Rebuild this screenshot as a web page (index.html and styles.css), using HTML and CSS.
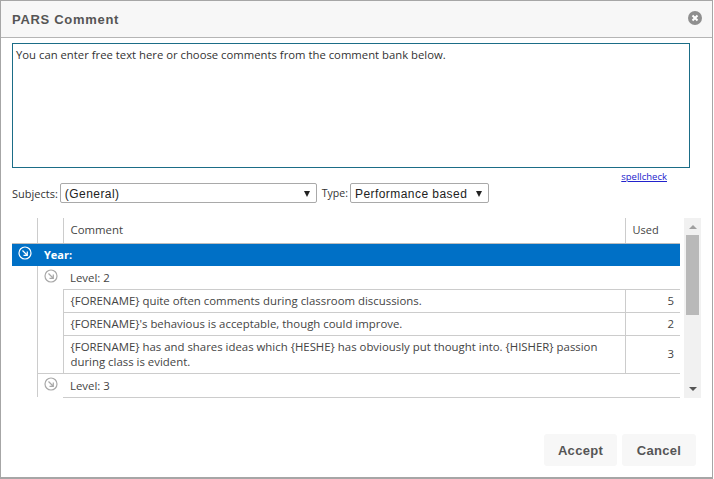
FILE: index.html
```html
<!DOCTYPE html>
<html lang="en">
<head>
  <meta charset="UTF-8">
  <title>PARS Comment</title>
  <link rel="stylesheet" href="styles.css">
</head>
<body>

<div class="dialog">
  <header class="title-bar">
    <h1>PARS Comment</h1>
    <svg class="close-icon" width="14" height="14" viewBox="0 0 14 14">
      <circle cx="7" cy="7" r="7" fill="#8f8f8f"/>
      <path d="M4.5 4.5l5 5M9.5 4.5l-5 5" stroke="#fff" stroke-width="2"/>
    </svg>
  </header>

  <div class="body">
    <textarea class="free-text">You can enter free text here or choose comments from the comment bank below.</textarea>
    <div class="spell-row"><a href="#">spellcheck</a></div>

    <div class="filters">
      <label>Subjects:</label>
      <div class="fake-select subject-select"><span>(General)</span><i class="arrow"></i></div>
      <label class="type-label">Type:</label>
      <div class="fake-select type-select"><span>Performance based</span><i class="arrow"></i></div>
    </div>

    <div class="bank">
      <div class="bank-scroll">
        <table>
          <colgroup>
            <col class="col-a"><col class="col-b"><col class="col-c"><col class="col-d">
          </colgroup>
          <tr class="head">
            <th></th><th></th><th>Comment</th><th>Used</th>
          </tr>
          <tr class="year">
            <td class="icon-cell">
              <svg class="arrow-icon" width="14" height="14" viewBox="0 0 14 14">
                <circle cx="7" cy="7" r="6" fill="none" stroke="#fff" stroke-width="1.2"/>
                <path d="M4.5 4.5l4.5 4.5M9.3 5.5v3.8H5.5" fill="none" stroke="#fff" stroke-width="1.2"/>
              </svg>
            </td>
            <td colspan="3" class="year-name">Year:</td>
          </tr>
          <tr class="level">
            <td class="blank"></td>
            <td class="icon-cell">
              <svg class="arrow-icon" width="14" height="14" viewBox="0 0 14 14">
                <circle cx="7" cy="7" r="6" fill="none" stroke="#a8a8a8" stroke-width="1.2"/>
                <path d="M4.5 4.5l4.5 4.5M9.3 5.5v3.8H5.5" fill="none" stroke="#a8a8a8" stroke-width="1.2"/>
              </svg>
            </td>
            <td colspan="2">Level: 2</td>
          </tr>
          <tr class="comment">
            <td class="blank"></td><td class="blank"></td>
            <td>{FORENAME} quite often comments during classroom discussions.</td>
            <td class="used">5</td>
          </tr>
          <tr class="comment">
            <td class="blank"></td><td class="blank"></td>
            <td>{FORENAME}'s behavious is acceptable, though could improve.</td>
            <td class="used">2</td>
          </tr>
          <tr class="comment last">
            <td class="blank"></td><td class="blank"></td>
            <td>{FORENAME} has and shares ideas which {HESHE} has obviously put thought into. {HISHER} passion during class is evident.</td>
            <td class="used">3</td>
          </tr>
          <tr class="level">
            <td class="blank"></td>
            <td class="icon-cell">
              <svg class="arrow-icon" width="14" height="14" viewBox="0 0 14 14">
                <circle cx="7" cy="7" r="6" fill="none" stroke="#a8a8a8" stroke-width="1.2"/>
                <path d="M4.5 4.5l4.5 4.5M9.3 5.5v3.8H5.5" fill="none" stroke="#a8a8a8" stroke-width="1.2"/>
              </svg>
            </td>
            <td colspan="2">Level: 3</td>
          </tr>
        </table>
      </div>
      <div class="scrollbar">
        <i class="up"></i>
        <div class="thumb"></div>
        <i class="down"></i>
      </div>
    </div>
  </div>

  <footer class="actions">
    <button>Accept</button>
    <button class="cancel">Cancel</button>
  </footer>
</div>

</body>
</html>
```

FILE: styles.css
```css
html, body {
  margin: 0;
  height: 100%;
  background: #fff;
}
body {
  font-family: "Open Sans", "Noto Sans", Arial, sans-serif;
  font-size: 11px;
  color: #444;
}
.dialog {
  box-sizing: border-box;
  width: 713px;
  height: 479px;
  border: 1px solid #a6a6a6;
  border-bottom-width: 2px;
  display: flex;
  flex-direction: column;
}
.title-bar {
  height: 36px;
  flex: none;
  background: #f7f7f7;
  border-bottom: 1px solid #b5b5b5;
  display: flex;
  justify-content: space-between;
  align-items: center;
  padding: 0 10px 0 11px;
}
.title-bar h1 {
  margin: 0;
  font: bold 13px "Liberation Sans", Arial, sans-serif;
  letter-spacing: 0.7px;
  color: #555;
}
.close-icon {
  margin-top: -3px;
}
.body {
  flex: 1;
  padding: 5px 0 0 11px;
  min-height: 0;
}
.free-text {
  display: block;
  box-sizing: border-box;
  width: 678px;
  height: 125px;
  margin: 0;
  padding: 3px;
  border: 1px solid #1b6d87;
  resize: none;
  font: 11.3px "Open Sans", sans-serif;
  color: #333;
  outline: none;
}
.spell-row {
  width: 655px;
  text-align: right;
  height: 15px;
  line-height: 16px;
}
.spell-row a {
  font-size: 9.5px;
  color: #2222cc;
}
.filters {
  display: flex;
  align-items: center;
  height: 20px;
}
.filters label {
  color: #333;
  margin-right: 2px;
}
.filters .type-label {
  margin-left: 5px;
  font-size: 10.5px;
}
.fake-select {
  box-sizing: border-box;
  height: 20px;
  background: #fff;
  border: 1px solid #a9a9a9;
  border-radius: 2px;
  display: flex;
  justify-content: space-between;
  align-items: center;
  color: #222;
  font: 12px "Liberation Sans", Arial, sans-serif;
  letter-spacing: 0.45px;
  padding: 1px 6px 0 4px;
}
.subject-select { width: 257px; }
.type-select { width: 139px; }
.arrow {
  width: 0;
  height: 0;
  border: 3.5px solid transparent;
  border-top: 6px solid #222;
  border-bottom: 0;
}
.bank {
  display: flex;
  margin-top: 15px;
  height: 180px;
}
.bank-scroll {
  width: 668px;
  height: 180px;
  overflow: hidden;
}
table {
  border-collapse: collapse;
  table-layout: fixed;
  width: 668px;
}
.col-a { width: 25px; }
.col-b { width: 26px; }
.col-d { width: 55px; }
th, td {
  padding: 0 7px;
  font-weight: normal;
  font-size: 11.4px;
  text-align: left;
  line-height: 15px;
  color: #444;
}
.head th {
  height: 23px;
  padding-bottom: 2px;
  border-bottom: 1px solid #bdbdbd;
  border-left: 1px solid #ccc;
}
.head th:first-child { border-left: 0; }
.head th:last-child { font-size: 11px; }
.year td {
  height: 22px;
  padding-bottom: 1px;
  box-sizing: border-box;
  background: #0070c6;
  color: #fff;
  font-weight: bold;
  font-size: 11px;
}
.icon-cell {
  padding: 0;
  text-align: center;
}
.arrow-icon {
  display: block;
  margin: -3px 0 0 6px;
}
.level td {
  height: 23px;
  border-bottom: 1px solid #ccc;
}
.level td.blank, .level td.icon-cell {
  border-bottom: 0;
}
.level td.blank {
  border-right: 1px solid #ccc;
}
.comment td {
  height: 22px;
  border: 1px solid #ccc;
  border-right: 0;
}
.comment.last td {
  padding-top: 3px;
  padding-bottom: 4px;
}
.comment td.blank {
  border-width: 0;
}
.comment td.blank:nth-child(2) {
  border-left: 1px solid #ccc;
}
.comment.last td.blank:nth-child(2) {
  border-bottom: 1px solid #ccc;
}
.comment td.used {
  text-align: right;
  padding-right: 6px;
}
.scrollbar {
  margin-left: 4px;
  width: 17px;
  height: 180px;
  background: #f1f1f1;
  display: flex;
  flex-direction: column;
  align-items: center;
}
.thumb {
  width: 13px;
  height: 80px;
  background: #b9b9b9;
  margin-top: 6px;
}
.up, .down {
  width: 0;
  height: 0;
  border: 4px solid transparent;
}
.up {
  border-bottom: 4px solid #a0a0a0;
  border-top: 0;
  margin-top: 7px;
}
.down {
  border-top: 4px solid #555;
  border-bottom: 0;
  margin-top: auto;
  margin-bottom: 7px;
}
.actions {
  flex: none;
  display: flex;
  justify-content: flex-end;
  gap: 5px;
  padding: 0 16px 11px 0;
}
.actions button {
  width: 73px;
  height: 32px;
  border: 0;
  border-radius: 3px;
  background: #f7f7f7;
  font: bold 13px "Liberation Sans", Arial, sans-serif;
  letter-spacing: 0.3px;
  color: #555;
}
.actions .cancel {
  width: 74px;
}
```
